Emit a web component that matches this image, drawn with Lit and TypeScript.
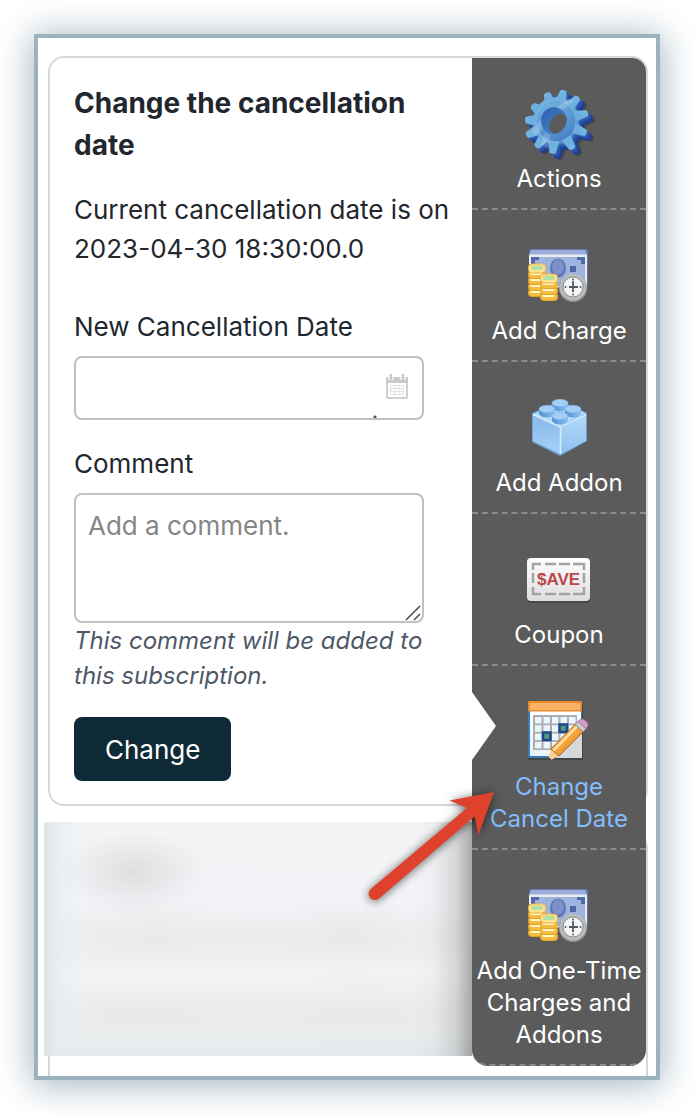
import { LitElement, html, css, svg } from "lit";
import { customElement } from "lit/decorators.js";
import { classMap } from "lit/directives/class-map.js";

// Angle and reach of each tooth; the wheel is seen slightly from the side.
const gearTeeth = [
  [14, 32], [43, 33], [76, 33], [112, 33], [149, 33], [186, 33],
  [217, 33], [244, 33], [272, 31], [303, 29], [342, 30],
];

const gearIcon = html`<svg class="icon" viewBox="0 0 64 64" aria-hidden="true">
  <defs>
    <linearGradient id="gear-face" gradientUnits="userSpaceOnUse" x1="-14" y1="-28" x2="14" y2="30">
      <stop offset="0" stop-color="#74b9e4" />
      <stop offset="0.5" stop-color="#5c9ad3" />
      <stop offset="1" stop-color="#3c70bb" />
    </linearGradient>
    <linearGradient id="gear-hole" x1="0" y1="0" x2="1" y2="1">
      <stop offset="0" stop-color="#2c5fae" />
      <stop offset="1" stop-color="#4a8bcd" />
    </linearGradient>
    <g id="gear-shape">
      <ellipse rx="23" ry="24" />
      ${gearTeeth.map(
        ([a, r]) =>
          svg`<path transform="rotate(${a})" d="M-5.5 -20 L-3.2 ${1 - r} Q0 ${-r - 1} 3.2 ${1 - r} L5.5 -20 Z" />`
      )}
    </g>
  </defs>
  <g transform="translate(36 36)" fill="#000" opacity=".2"><use href="#gear-shape" /></g>
  <g transform="translate(34 35)" fill="#1d3d90"><use href="#gear-shape" /></g>
  <g transform="translate(32.500 33.500)" fill="#2448a0"><use href="#gear-shape" /></g>
  <g transform="translate(31 32)" fill="#2f5bb0"><use href="#gear-shape" /></g>
  <g transform="translate(29 30)" fill="url(#gear-face)"><use href="#gear-shape" /></g>
  <ellipse cx="29" cy="30" rx="20" ry="21.500" fill="none" stroke="#8fc0ea" stroke-width="1.200" opacity=".5" />
  <path d="M4 42 Q12 26 42 8 L47 10 Q28 24 9 44 Z" fill="#fff" opacity=".2" />
  <path d="M18 42 L23 44 L22 58 L14 54 Z" fill="#fff" opacity=".2" />
  <ellipse cx="27" cy="29.700" rx="13" ry="13.500" fill="url(#gear-hole)" />
  <ellipse cx="30.800" cy="32.500" rx="7.500" ry="11" transform="rotate(34 30.8 32.5)" fill="#5b5b5b" />
</svg>`;

const coin = (x: number, y: number) => svg`
  <rect x=${x} y=${y} width="17" height="7.5" rx="3" fill="#f3bd3f" stroke="#e5a12d" stroke-width="1" />
  <rect x=${x + 2} y=${y + 1} width="12" height="3" rx="1.5" fill="#fff6c4" />`;

const chargeIcon = html`<svg class="icon" viewBox="0 0 64 64" aria-hidden="true">
  <rect x="2" y="6" width="59" height="38" rx="2" fill="#6577b3" />
  <path d="M4 7h54l2 5H2z" fill="#9badd8" />
  <rect x="2" y="11.500" width="58" height="33" rx="1" fill="#e9edf2" />
  <rect x="4" y="14" width="54" height="29" fill="#9db2dc" />
  <path d="M4 14h8v3H8v4H4zM58 14h-8v3h4v4h4z" fill="#5168a6" />
  <ellipse cx="31" cy="25" rx="8" ry="9.500" fill="#5f76b4" />
  <ellipse cx="31" cy="24" rx="6" ry="7.500" fill="#7b90c8" />
  <rect x="43" y="23" width="6" height="6" fill="#4c66a5" />
  ${coin(1.5, 46)}${coin(1.5, 40)}${coin(1.5, 34)}${coin(1.5, 28)}
  <rect x="1.500" y="21" width="17" height="9" rx="3.500" fill="#fce58a" stroke="#eeb13b" />
  <rect x="4" y="22.500" width="12" height="4.500" rx="2" fill="#b3dfa0" />
  ${coin(13.5, 50)}${coin(13.5, 44)}${coin(13.5, 38)}
  <rect x="13.500" y="31" width="17" height="9" rx="3.500" fill="#fce58a" stroke="#eeb13b" />
  <rect x="16" y="32.500" width="12" height="4.500" rx="2" fill="#b3dfa0" />
  <circle cx="46" cy="45" r="14" fill="#8d8f91" />
  <circle cx="46" cy="44" r="13.500" fill="#b9babc" />
  <circle cx="46" cy="44" r="10" fill="#f4f5f6" stroke="#8b8d90" stroke-width="1" />
  <path d="M46 38v11M42 44h9" stroke="#55585c" stroke-width="1.800" />
  <g fill="#55585c">
    <circle cx="46" cy="36.500" r="1" /><circle cx="46" cy="51.500" r="1" />
    <circle cx="38.500" cy="44" r="1" /><circle cx="53.500" cy="44" r="1" />
  </g>
</svg>`;

const stud = (x: number, y: number) => svg`
  <path d="M${x - 8} ${y}v4a8 4.500 0 0 0 16 0v-4z" fill="url(#stud-side)" />
  <ellipse cx=${x} cy=${y} rx="8" ry="3.600" fill="#a3cff6" stroke="#86b9ea" stroke-width=".8" />`;

const brickIcon = html`<svg class="icon" viewBox="0 0 64 64" aria-hidden="true">
  <defs>
    <linearGradient id="brick-left" x1="0" y1="0" x2="0" y2="1">
      <stop offset="0" stop-color="#8ab9ea" /><stop offset="1" stop-color="#a5d0f7" />
    </linearGradient>
    <linearGradient id="brick-right" x1="0" y1="0" x2="0" y2="1">
      <stop offset="0" stop-color="#b4d9f8" /><stop offset="1" stop-color="#8dc0ef" />
    </linearGradient>
    <linearGradient id="stud-side" x1="0" y1="0" x2="1" y2="0">
      <stop offset="0" stop-color="#4f8fd3" /><stop offset="1" stop-color="#8dc0f0" />
    </linearGradient>
  </defs>
  <path d="M5 18L33 6l27 12v28L33 61 5 47z" fill="#6c9fd2" />
  <path d="M6 19L33 7l26 11-26 13z" fill="#b9dcfa" />
  <path d="M6 20l27 12v27L6 46z" fill="url(#brick-left)" />
  <path d="M34 32.500L59 20v26L34 59z" fill="url(#brick-right)" />
  <path d="M6 19.500L33.500 32 59 19.500M33.500 32v27" fill="none" stroke="#d8edfd" stroke-width="1.500" />
  ${stud(33, 8)}${stud(20, 14)}${stud(46, 14)}${stud(33, 21)}
</svg>`;

const couponIcon = html`<svg class="icon" viewBox="0 0 64 64" aria-hidden="true">
  <defs>
    <linearGradient id="coupon-paper" x1="0" y1="0" x2="0" y2="1">
      <stop offset="0" stop-color="#fdfdfd" /><stop offset="1" stop-color="#dedede" />
    </linearGradient>
  </defs>
  <rect x="0" y="13" width="63" height="43" rx="4" fill="#000" opacity=".22" />
  <rect x="0" y="11" width="63" height="43" rx="4" fill="url(#coupon-paper)" />
  <path
    d="M6 23V17h8M18 17h11M32 17h11M46 17h11v6M57 26v10M57 40v7H46M43 47H32M29 47H18M14 47H6v-7M6 36V26"
    fill="none" stroke="#a3a3a3" stroke-width="2.500"
  />
  <text x="31.500" y="38" text-anchor="middle" class="save">$AVE</text>
</svg>`;

const calendarIcon = html`<svg class="icon" viewBox="0 0 64 64" aria-hidden="true">
  <defs>
    <linearGradient id="page" x1="0" y1="0" x2="0" y2="1">
      <stop offset="0" stop-color="#fff" /><stop offset="1" stop-color="#e6f3fb" />
    </linearGradient>
    <linearGradient id="wood" x1="0" y1="0" x2="1" y2="1">
      <stop offset="0" stop-color="#ffd08a" /><stop offset=".5" stop-color="#f6a63c" />
      <stop offset="1" stop-color="#c9761d" />
    </linearGradient>
  </defs>
  <g transform="translate(-1 0)">
    <rect x="2" y="4" width="55" height="57" rx="1" fill="#000" opacity=".25" />
    <rect x="2" y="3" width="54" height="56" fill="#377bb8" />
    <rect x="4" y="12" width="51" height="45" fill="url(#page)" />
    <rect x="2" y="2" width="54" height="10.500" rx="1" fill="#e98a2b" />
    <rect x="4" y="4" width="50" height="7" fill="#f9b266" />
    <rect x="7" y="16" width="44" height="35" fill="#acacae" />
    <g fill="#e9f6fd">
      ${[0, 1, 2, 3].map((r) =>
        [0, 1, 2, 3, 4].map(
          (c) => svg`<rect x=${9 + c * 8.5} y=${18 + r * 8.3} width="6.5" height="6.5" />`
        )
      )}
    </g>
    <g fill="#4f9a80" stroke="#1d4a8d" stroke-width="2.500">
      <rect x="17" y="33.500" width="7.500" height="7.500" /><rect x="33.500" y="25.500" width="7.500" height="7.500" />
    </g>
    <path d="M30 59L56 34v25z" fill="#d5d8dc" />
    <path d="M21 63l4-13 8 7z" fill="#f5cf93" />
    <path d="M21 63l1.500-5 3 2.500z" fill="#3b3b3b" />
    <path d="M25 50L50 24.500l8 7.500-25 25z" fill="url(#wood)" stroke="#a9671f" stroke-width="1" />
    <path d="M27.500 51.500L51.500 27" stroke="#ffe2ae" stroke-width="2.500" />
    <path d="M49 25.500l4-4 8 7.500-4 4z" fill="#c9cbd0" stroke="#77797e" stroke-width=".8" />
    <path d="M52 22.500l2-2q2.500-1.500 5 .8l2.500 2.700q1.500 2-.2 4L60 30z" fill="#d79ac8" stroke="#9e6c98" stroke-width=".8" />
  </g>
</svg>`;

const items = [
  { label: "Actions", icon: gearIcon, active: false },
  { label: "Add Charge", icon: chargeIcon, active: false },
  { label: "Add Addon", icon: brickIcon, active: false },
  { label: "Coupon", icon: couponIcon, active: false },
  { label: "Change Cancel Date", icon: calendarIcon, active: true },
  { label: "Add One-Time Charges and Addons", icon: chargeIcon, active: false },
];

@customElement("action-rail")
class ActionRail extends LitElement {
  static styles = css`
    :host {
      display: block;
      background: #5b5b5b;
      border-radius: 0 14px 16px 16px;
    }
    .item {
      position: relative;
      display: flex;
      flex-direction: column;
      align-items: center;
      gap: 8px;
      padding: 33px 4px 13px;
      border-bottom: 2px dashed #8a8a8a;
      color: #fff;
      font-size: 24px;
      line-height: 32px;
      text-align: center;
      text-decoration: none;
    }
    .item:last-child {
      border-radius: 0 0 16px 16px;
    }
    .label {
      max-width: 168px;
    }
    .active {
      color: #83bdfb;
    }
    .active .label {
      max-width: 150px;
    }
    .active::before {
      content: "";
      position: absolute;
      left: 0;
      top: 26px;
      width: 24px;
      height: 68px;
      background: #fff;
      clip-path: polygon(0 0, 100% 50%, 0 100%);
    }
    .icon {
      display: block;
      width: 64px;
      height: 64px;
      overflow: visible;
    }
    .save {
      font: 700 17px "Liberation Sans", sans-serif;
      fill: #b94848;
    }
  `;

  render() {
    return html`<nav aria-label="Subscription actions">
      ${items.map(
        (item) => html`<a href="#" class=${classMap({ item: true, active: item.active })}>
          ${item.icon}<span class="label">${item.label}</span>
        </a>`
      )}
    </nav>`;
  }
}

@customElement("cancel-form")
class CancelForm extends LitElement {
  static styles = css`
    :host {
      display: block;
      color: #22272e;
      font-size: 26px;
      line-height: 39px;
    }
    .title {
      margin: 0 0 24px;
      font-size: 28px;
      line-height: 42px;
      font-weight: 700;
    }
    .current {
      margin: 0 0 39px;
    }
    .field {
      display: grid;
      max-width: 350px;
      margin-bottom: 24px;
    }
    .label {
      margin-bottom: 10px;
    }
    .control {
      display: grid;
    }
    .control > * {
      grid-area: 1 / 1;
    }
    .input {
      box-sizing: border-box;
      width: 100%;
      margin: 0;
      border: 2px solid #bcc0c9;
      border-radius: 8px;
      background: #fff;
      color: inherit;
      font: inherit;
      padding: 11px 12px;
      outline: none;
    }
    .date {
      height: 64px;
      background: radial-gradient(circle at 299px 59px, #555 1px, transparent 2px) #fff;
    }
    .comment {
      height: 130px;
      resize: none;
    }
    .comment::placeholder {
      color: #858585;
      opacity: 1;
    }
    .picker {
      place-self: center end;
      display: block;
      margin: 0 14px 2px 0;
      padding: 0;
      border: 0;
      background: none;
    }
    .glyph {
      display: block;
    }
    .grip {
      place-self: end;
      margin: 2px 3px;
      pointer-events: none;
    }
    .help {
      margin: 0;
      color: #4e5866;
      font-size: 24px;
      line-height: 35px;
      font-style: italic;
    }
    .submit {
      display: block;
      height: 64px;
      padding: 0 31px;
      border: 0;
      border-radius: 8px;
      background: #0f2a37;
      color: #fff;
      font: inherit;
    }
  `;

  render() {
    return html`<form>
      <h2 class="title">Change the cancellation date</h2>
      <p class="current">Current cancellation date is on 2023-04-30 18:30:00.0</p>
      <div class="field">
        <label class="label" for="date">New Cancellation Date</label>
        <div class="control">
          <input class="input date" id="date" type="text" />
          <button class="picker" type="button" aria-label="Open calendar">
            <svg class="glyph" width="26" height="28" viewBox="0 0 26 28">
              <rect x="3" y="6" width="20" height="19" rx="1" fill="#fff" stroke="#d0d0d0" stroke-width="2" />
              <rect x="2" y="4" width="22" height="6" fill="#c9c9c9" />
              <path d="M7 1v6M19 1v6" stroke="#fff" stroke-width="5" />
              <path d="M7 1v6M19 1v6" stroke="#c8c8c8" stroke-width="2.500" />
              <path d="M6.500 12.500h13v9h-13zM6.500 15.500h13M6.500 18.500h13M11 12.500v9M15 12.500v9" fill="none" stroke="#e2e2e2" />
            </svg>
          </button>
        </div>
      </div>
      <div class="field">
        <label class="label" for="comment">Comment</label>
        <div class="control">
          <textarea class="input comment" id="comment" placeholder="Add a comment." aria-describedby="help"></textarea>
          <svg class="grip" width="16" height="16" viewBox="0 0 16 16" aria-hidden="true">
            <path d="M1 15L15 1M9 15l6-6" stroke="#4a4a4a" stroke-width="1.500" />
          </svg>
        </div>
        <p class="help" id="help">This comment will be added to this subscription.</p>
      </div>
      <button class="submit" type="button">Change</button>
    </form>`;
  }
}

@customElement("app-root")
class AppRoot extends LitElement {
  static styles = css`
    :host {
      display: block;
      box-sizing: border-box;
      min-height: 100vh;
      padding: 34px;
      background: #fff;
      font-family: Inter, "Open Sans", sans-serif;
    }
    .frame {
      position: relative;
      box-sizing: border-box;
      min-height: calc(100vh - 68px);
      display: grid;
      grid-template-columns: minmax(0, 1fr) 176px;
      grid-template-rows: auto 1fr;
      row-gap: 16px;
      padding: 18px 8px 0 10px;
      border: 4px solid #9ab3bf;
      background: #fff;
      box-shadow: 0 3px 34px 2px #a3b5c2;
    }
    .card {
      border: 2px solid #d5d8de;
      border-radius: 16px;
    }
    .main {
      grid-area: 1 / 1 / 2 / 3;
      padding: 24px 190px 23px 24px;
    }
    .next {
      grid-area: 2 / 1 / 3 / 3;
      margin-top: 10px;
      border-bottom: 0;
      border-radius: 16px 16px 0 0;
    }
    .redacted {
      grid-area: 2 / 1;
      margin: 0 0 20px -4px;
      background:
        linear-gradient(to left, rgba(80, 80, 80, 0.45), rgba(80, 80, 80, 0.18) 16px, rgba(80, 80, 80, 0.03) 38px, transparent 60px),
        linear-gradient(to right, #dde5e9, rgba(230, 236, 240, 0.6) 16px, transparent 40px),
        linear-gradient(to top, rgba(222, 231, 234, 0.8), transparent 26px),
        radial-gradient(75px 42px at 90px 50px, rgba(208, 208, 210, 0.6), transparent),
        radial-gradient(170px 40px at 110px 115px, rgba(226, 226, 227, 0.6), transparent),
        radial-gradient(150px 40px at 305px 115px, rgba(224, 225, 226, 0.6), transparent),
        radial-gradient(190px 40px at 100px 195px, rgba(226, 227, 228, 0.7), transparent),
        radial-gradient(190px 44px at 320px 195px, rgba(226, 227, 228, 0.7), transparent),
        linear-gradient(#f3f4f5, #f3f4f7 30%, #f1f2f2);
    }
    .rail {
      grid-area: 1 / 2 / 3 / 3;
      align-self: start;
      margin: 2px 2px 10px 0;
    }
    .pointer {
      position: absolute;
      left: 322px;
      top: 742px;
      overflow: visible;
      pointer-events: none;
      filter: drop-shadow(0 1px 5px rgba(0, 0, 0, 0.6));
    }
  `;

  render() {
    return html`<main class="frame">
      <section class="card main"><cancel-form></cancel-form></section>
      <section class="card next"></section>
      <div class="redacted"></div>
      <action-rail class="rail"></action-rail>
      <svg class="pointer" width="140" height="130" viewBox="0 0 140 130" aria-hidden="true">
        <path
          d="M134 12 L89.500 20.500 L107 28 L10.800 109 A6.300 6.300 0 0 0 19 118.600 L114.500 36.500 L118.500 55 Z"
          fill="#de412c"
        />
      </svg>
    </main>`;
  }
}
